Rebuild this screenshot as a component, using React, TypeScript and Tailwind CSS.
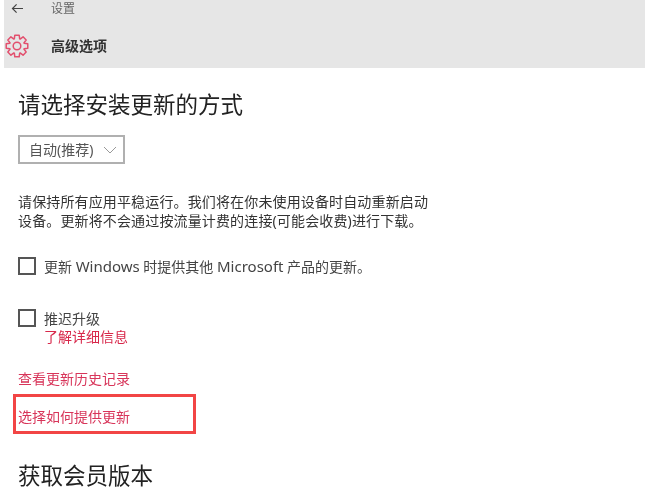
import React from "react";

function Box() {
  return <span className="block w-[18px] h-[18px] border-2 border-[#555555] shrink-0" />;
}

const gearPath = (() => {
  const pts: string[] = [];
  const outer = 11;
  const inner = 7.6;
  for (let i = 0; i < 8; i++) {
    const a = (i * Math.PI) / 4 - Math.PI / 2;
    const step = [
      [-0.36, inner],
      [-0.2, outer],
      [0.2, outer],
      [0.36, inner],
    ];
    for (const [da, r] of step) {
      pts.push(`${(12 + r * Math.cos(a + da)).toFixed(2)} ${(12 + r * Math.sin(a + da)).toFixed(2)}`);
    }
  }
  return `M${pts.join("L")}Z`;
})();

function Gear() {
  return (
    <svg width="24" height="24" viewBox="0 0 24 24" fill="none" stroke="#e2506e" strokeWidth="1.5" strokeLinejoin="round" strokeLinecap="round">
      <path d={gearPath} />
      <circle cx="12" cy="12" r="3.8" />
    </svg>
  );
}

export default function App() {
  return (
    <div className="w-[645px] h-[494px] overflow-hidden bg-white text-[#333333] blur-[0.6px] font-['Noto_Sans','Noto_Sans_CJK_SC',sans-serif]">
      <header className="ml-[4px] h-[68px] bg-[#e6e6e6] flex flex-col">
        <div className="h-[17px] flex items-center">
          <svg width="13" height="11" viewBox="0 0 14 12" fill="none" stroke="#444444" strokeWidth="1.3" className="ml-[7px]">
            <path d="M13 6H1.5M6 1.5 1.5 6 6 10.5" />
          </svg>
          <span className="ml-[27px] text-[12px] leading-[16px] text-[#666666]">设置</span>
        </div>
        <div className="mt-[17px] flex items-center h-[24px]">
          <span className="block ml-[1px]"><Gear /></span>
          <span className="ml-[22px] text-[14px] font-bold text-[#333333] leading-[24px]">高级选项</span>
        </div>
      </header>

      <main className="pl-[18px]">
        <h1 className="mt-[21px] text-[22.5px] leading-[32px] font-normal text-[#222222]">请选择安装更新的方式</h1>
        <div className="mt-[14px] w-[107px] h-[29px] border-2 border-[#b0b0b0] flex items-center pl-[9px] text-[14px] text-[#555555]">
          <span className="whitespace-nowrap">自动(推荐)</span>
          <svg width="14" height="8" viewBox="0 0 14 8" fill="none" stroke="#999999" strokeWidth="1" className="ml-[10px] shrink-0">
            <path d="M1 1l6 6 6-6" />
          </svg>
        </div>
        <p className="mt-[28px] w-[416px] text-[14px] leading-[19px] tracking-[0.14px] text-[#333333]">
          请保持所有应用平稳运行。我们将在你未使用设备时自动重新启动设备。更新将不会通过按流量计费的连接(可能会收费)进行下载。
        </p>
        <label className="mt-[27px] flex items-center h-[18px]">
          <Box />
          <span className="ml-[8px] text-[14px] text-[#444444] whitespace-nowrap">
            更新 <span className="text-[15px]">Windows</span> 时提供其他 <span className="text-[15px]">Microsoft</span> 产品的更新。
          </span>
        </label>
        <label className="mt-[34px] flex items-center h-[18px]">
          <Box />
          <span className="ml-[8px] text-[14px] text-[#444444]">推迟升级</span>
        </label>
        <a className="block ml-[26px] mt-[1px] text-[14px] leading-[18px] text-[#d8274a]">了解详细信息</a>
        <a className="block mt-[24px] text-[14px] leading-[18px] text-[#d8355a]">查看更新历史记录</a>
        <div className="relative mt-[20px]">
          <a className="block text-[14px] leading-[18px] text-[#d8355a]">选择如何提供更新</a>
          <span className="absolute left-[-5px] top-[-14px] w-[183px] h-[40px] border-[3px] border-[#f24545]" />
        </div>
        <h2 className="mt-[34px] text-[22.5px] leading-[32px] font-normal text-[#222222]">获取会员版本</h2>
      </main>
    </div>
  );
}
